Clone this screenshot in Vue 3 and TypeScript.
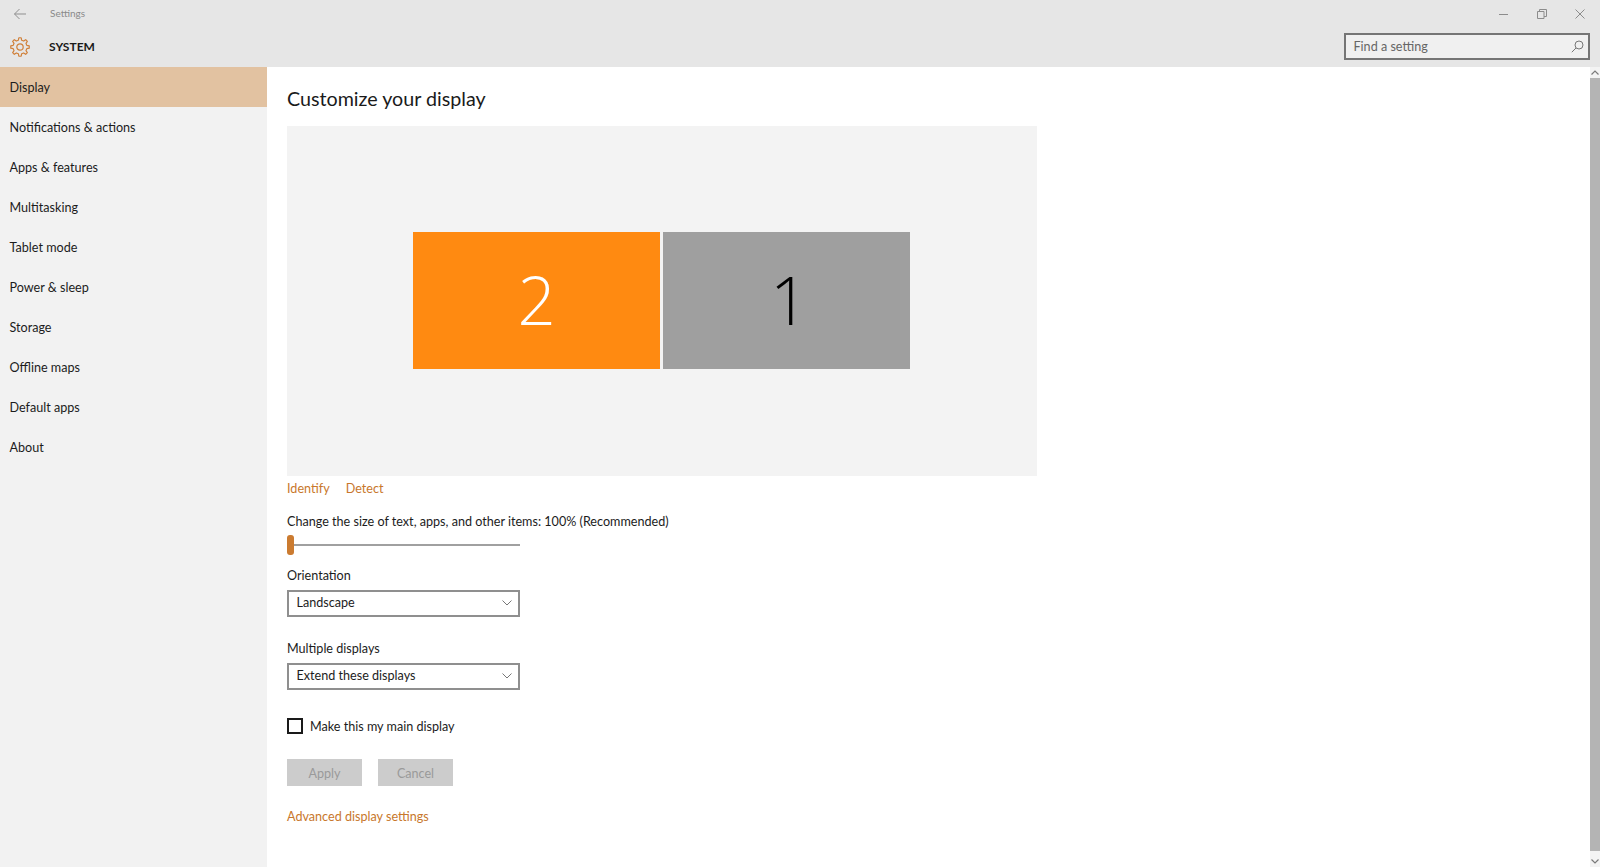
<script setup lang="ts">
const navItems: string[] = [
  'Display',
  'Notifications & actions',
  'Apps & features',
  'Multitasking',
  'Tablet mode',
  'Power & sleep',
  'Storage',
  'Offline maps',
  'Default apps',
  'About',
]
const selects: { label: string; value: string }[] = [
  { label: 'Orientation', value: 'Landscape' },
  { label: 'Multiple displays', value: 'Extend these displays' },
]

function buildGearPath(): string {
  const teeth = 8
  const outer = 9.3
  const inner = 7
  const pt = (r: number, a: number): string =>
    `${(10 + r * Math.cos(a)).toFixed(2)} ${(10 + r * Math.sin(a)).toFixed(2)}`
  const step = (Math.PI * 2) / teeth
  let d = ''
  for (let i = 0; i < teeth; i++) {
    const c = i * step - Math.PI / 2
    d += `${i === 0 ? 'M' : 'L'}${pt(inner, c - step * 0.3)}L${pt(outer, c - step * 0.16)}L${pt(outer, c + step * 0.16)}L${pt(inner, c + step * 0.3)}`
  }
  return d + 'Z'
}
const gearPath = buildGearPath()
</script>

<template>
  <div class="window">
    <header class="header">
      <div class="titlebar">
        <svg class="back" width="14" height="12" viewBox="0 0 14 12" fill="none" stroke="#8f8f8f" stroke-width="1">
          <path d="M13 6H1.500M6.500 1 1.500 6l5 5" />
        </svg>
        <span class="app-title">Settings</span>
        <div class="window-controls">
          <svg width="10" height="10" viewBox="0 0 10 10" fill="none" stroke="#8c8c8c"><path d="M0 5.500h9" /></svg>
          <svg width="10" height="10" viewBox="0 0 10 10" fill="none" stroke="#8c8c8c"><path d="M.5 2.500h6.500v7H.5zM2.500 2.500V.5h7v7H7" /></svg>
          <svg width="10" height="10" viewBox="0 0 10 10" fill="none" stroke="#8c8c8c"><path d="M.5.5l9 9M9.500 .5l-9 9" /></svg>
        </div>
      </div>
      <div class="sysbar">
        <svg class="gear" width="20" height="20" viewBox="0 0 20 20" fill="none" stroke="#d0803a" stroke-width="1.2" stroke-linejoin="round">
          <circle cx="10" cy="10" r="3.2" />
          <path :d="gearPath" />
        </svg>
        <span class="sys-title">SYSTEM</span>
        <div class="search">
          <span>Find a setting</span>
          <svg width="13" height="13" viewBox="0 0 13 13" fill="none" stroke="#777" stroke-width="1"><circle cx="8" cy="5" r="4" /><path d="M5 8 .8 12.200" /></svg>
        </div>
      </div>
    </header>

    <div class="body">
      <nav class="sidebar">
        <div v-for="(item, i) in navItems" :key="item" class="nav-item" :class="{ active: i === 0 }">{{ item }}</div>
      </nav>

      <main class="content">
        <h1 class="heading">Customize your display</h1>
        <div class="preview">
          <div class="monitor orange">2</div>
          <div class="monitor gray">1</div>
        </div>
        <div class="links">
          <span class="link">Identify</span>
          <span class="link">Detect</span>
        </div>
        <div class="scale-label">Change the size of text, apps, and other items: 100% (Recommended)</div>
        <div class="slider"><div class="thumb"></div></div>

        <div v-for="s in selects" :key="s.label" class="field">
          <div class="field-label">{{ s.label }}</div>
          <div class="select">
            <span>{{ s.value }}</span>
            <svg width="10" height="6" viewBox="0 0 10 6" fill="none" stroke="#777" stroke-width="1"><path d="M.5.5 5 5 9.500 .5" /></svg>
          </div>
        </div>

        <div class="check-row">
          <span class="checkbox"></span>
          <span>Make this my main display</span>
        </div>
        <div class="buttons">
          <div class="btn">Apply</div>
          <div class="btn">Cancel</div>
        </div>
        <div class="link advanced">Advanced display settings</div>
      </main>

      <div class="scrollbar">
        <svg width="8" height="5" viewBox="0 0 8 5" fill="none" stroke="#7a7a7a" stroke-width="1.2"><path d="M.5 4.500 4 1l3.500 3.500" /></svg>
        <div class="scroll-thumb"></div>
        <svg width="8" height="5" viewBox="0 0 8 5" fill="none" stroke="#7a7a7a" stroke-width="1.2"><path d="M.5.5 4 4 7.500 .5" /></svg>
      </div>
    </div>
  </div>
</template>

<style>
html, body { margin: 0; overflow: hidden; }
</style>

<style scoped>
.window {
  width: 1600px;
  height: 867px;
  display: flex;
  flex-direction: column;
  background: #fff;
  color: #1c1c1c;
  font-family: Lato, "Open Sans", sans-serif;
  font-size: 12.6px;
  overflow: hidden;
}
.header { height: 67px; background: #e6e6e6; flex: none; }
.titlebar { height: 27px; display: flex; align-items: center; position: relative; }
.back { margin-left: 13px; }
.app-title { margin-left: 23px; margin-bottom: 2px; font-size: 10px; color: #8a8a8a; }
.window-controls { margin-left: auto; margin-right: 15px; display: flex; gap: 28px; align-items: center; }
.sysbar { height: 40px; display: flex; align-items: center; }
.gear { margin-left: 10px; }
.sys-title { margin-left: 19px; margin-bottom: 1px; font-size: 12px; font-weight: 700; color: #1a1a1a; }
.search {
  margin-left: auto;
  margin-right: 10px;
  margin-top: -1px;
  width: 246px;
  height: 27px;
  box-sizing: border-box;
  border: 2px solid #757575;
  background: #f0f0f0;
  display: flex;
  align-items: center;
  justify-content: space-between;
  padding: 0 4px 0 7.5px;
  color: #666;
}
.body { flex: 1; min-height: 0; display: flex; }
.sidebar { width: 267px; background: #f2f2f2; flex: none; }
.nav-item { height: 40px; line-height: 42px; padding-left: 9.5px; }
.nav-item.active { background: #e2c2a1; }
.content { flex: 1; padding-left: 20px; min-width: 0; }
.heading { margin: 0; height: 59px; font-size: 19.7px; font-weight: 400; line-height: 64px; color: #1a1a1a; }
.preview {
  width: 750px;
  height: 350px;
  background: #f3f3f3;
  display: flex;
  justify-content: flex-start;
  gap: 3px;
  padding: 106px 0 0 126px;
  box-sizing: border-box;
}
.monitor {
  width: 247px;
  height: 137px;
  display: flex;
  align-items: center;
  justify-content: center;
  font-family: "Open Sans", Lato, sans-serif;
  font-weight: 300;
  font-size: 67px;
  line-height: 1;
  padding-bottom: 3px;
  box-sizing: border-box;
}
.orange { background: #ff8a11; color: #fff; }
.gray { background: #9f9f9f; color: #000; padding-left: 5px; }
.links { display: flex; gap: 16px; height: 24px; line-height: 26px; }
.link { color: #c8772c; }
.scale-label { margin-top: 12px; height: 20px; line-height: 20px; }
.slider { margin-top: 3px; width: 233px; height: 20px; position: relative; display: flex; align-items: center; }
.slider::before { content: ""; width: 100%; height: 2px; background: #a0a0a0; }
.thumb { position: absolute; left: 0; top: 0; width: 7px; height: 20px; border-radius: 3px; background: #cb7b30; }
.field { margin-top: 10px; height: 62px; }
.field + .field { margin-top: 11px; }
.field-label { height: 20px; line-height: 21px; }
.select {
  margin-top: 5px;
  width: 233px;
  height: 27px;
  box-sizing: border-box;
  border: 2px solid #8f8f8f;
  display: flex;
  align-items: center;
  justify-content: space-between;
  padding: 0 6px 3px 7.5px;
}
.select svg { margin-top: 2px; }
.check-row { margin-top: 16px; height: 20px; display: flex; align-items: center; gap: 7px; }
.checkbox { width: 16px; height: 16px; box-sizing: border-box; border: 2px solid #1a1a1a; }
.buttons { margin-top: 23px; display: flex; gap: 16px; }
.btn {
  width: 75px;
  height: 27px;
  line-height: 30px;
  background: #ccc;
  color: #9a9a9a;
  text-align: center;
}
.advanced { margin-top: 20px; line-height: 21px; }
.scrollbar {
  width: 10px;
  flex: none;
  background: #f3f3f3;
  display: flex;
  flex-direction: column;
  align-items: center;
  justify-content: space-between;
  padding: 3px 0;
  box-sizing: border-box;
}
.scroll-thumb { width: 10px; flex: 1; margin: 3px 0 8px; background: #b4b4b4; }
</style>
